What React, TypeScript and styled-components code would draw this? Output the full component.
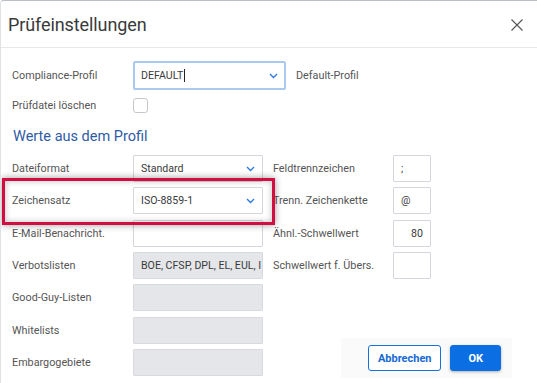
import React from "react";
import styled, { createGlobalStyle, css } from "styled-components";

const GlobalStyle = createGlobalStyle`
  html, body { margin: 0; padding: 0; background: #ffffff; }
  body { font-family: Roboto, "Noto Sans", Arial, sans-serif; color: #333; }
  * { box-sizing: border-box; }
`;

const Dialog = styled.div`
  position: relative;
  width: 537px;
  height: 383px;
  overflow: hidden;
  background: #fff;
  border-top: 1px solid #b9bec4;
  border-left: 1px solid #dfe2e5;
  border-top-left-radius: 4px;
`;

const Header = styled.div`
  height: 47px;
  display: flex;
  align-items: center;
  justify-content: space-between;
  padding: 1px 13px 0 7px;
  border-bottom: 1px solid #e6e8ea;
`;

const Title = styled.h1`
  margin: 0;
  font-size: 18px;
  font-weight: 400;
  color: #3a3a3a;
  letter-spacing: -0.1px;
`;

const CloseButton = styled.button`
  border: 0;
  background: none;
  padding: 0;
  width: 14px;
  height: 14px;
  display: flex;
  cursor: pointer;
`;

const Body = styled.div`
  padding: 13px 0 0 11px;
`;

const Row = styled.div<{ $mt?: number; $h?: number }>`
  display: flex;
  align-items: center;
  height: ${(p) => p.$h ?? 27}px;
  margin-top: ${(p) => p.$mt ?? 0}px;
`;

const Label = styled.span<{ $w?: number }>`
  width: ${(p) => p.$w ?? 121}px;
  flex: none;
  font-size: 10.8px;
  color: #555;
  white-space: nowrap;
`;

const Field = styled.div<{ $w: number; $h?: number; $disabled?: boolean; $focus?: boolean; $align?: string }>`
  width: ${(p) => p.$w}px;
  height: ${(p) => p.$h ?? 27}px;
  flex: none;
  display: flex;
  align-items: center;
  justify-content: ${(p) => p.$align ?? "flex-start"};
  padding: 0 ${(p) => (p.$align === "flex-end" ? 7 : 2)}px 0 7px;
  font-size: 10.6px;
  color: #3a3a3a;
  background: ${(p) => (p.$disabled ? "#e4e6e9" : "#fff")};
  border: 1px solid ${(p) => (p.$disabled ? "#d8dadd" : "#d3d6da")};
  border-radius: 1px;
  overflow: hidden;
  white-space: nowrap;
  ${(p) =>
    p.$focus &&
    css`
      border: 2px solid #a9c9f1;
      padding: 0 1px 0 6px;
      border-radius: 2px;
    `}
`;

const FieldText = styled.span`
  flex: 1;
  min-width: 0;
  white-space: nowrap;
`;

const Caret = styled.span`
  display: inline-block;
  width: 1px;
  height: 13px;
  background: #222;
  vertical-align: middle;
  margin-left: 1px;
`;

const Hint = styled.span`
  margin-left: 10px;
  font-size: 10.8px;
  color: #555;
`;

const Checkbox = styled.span`
  width: 15px;
  height: 15px;
  border: 1px solid #c4c8cc;
  border-radius: 3px;
  background: #fff;
`;

const SectionTitle = styled.h2`
  margin: 15px 0 0 1px;
  height: 18px;
  line-height: 18px;
  font-size: 14.5px;
  font-weight: 400;
  color: #2f5ba4;
`;

const Columns = styled.div`
  display: flex;
  margin-top: 9px;
  gap: 10px;
`;

const Column = styled.div<{ $w: number }>`
  width: ${(p) => p.$w}px;
  display: flex;
  flex-direction: column;
  gap: 5.33px;
`;

const Footer = styled.div`
  align-self: flex-end;
  width: 171px;
  margin-top: 54px;
  padding: 7px 11px 7px 27px;
  background: #fafafa;
  display: flex;
  gap: 9px;
`;

const Button = styled.button<{ $primary?: boolean }>`
  height: 26px;
  padding: 0;
  width: ${(p) => (p.$primary ? 51 : 74)}px;
  border-radius: 3px;
  font-family: Roboto, Arial, sans-serif;
  font-size: 11px;
  font-weight: 700;
  cursor: pointer;
  ${(p) =>
    p.$primary
      ? css`
          background: #0b6fe3;
          color: #fff;
          border: 1px solid #0b6fe3;
          box-shadow: 0 1px 3px rgba(0, 0, 0, 0.3);
        `
      : css`
          background: #fff;
          color: #1668d4;
          border: 1px solid #1670e0;
        `}
`;

const Highlight = styled.div`
  position: absolute;
  left: 1px;
  top: 177px;
  width: 273px;
  height: 47px;
  border: 3px solid #d20d41;
  box-shadow: 0 0 7px rgba(0, 0, 0, 0.4), inset 0 0 6px rgba(0, 0, 0, 0.25);
  pointer-events: none;
`;

const ChevronIcon = styled.svg`
  flex: none;
  margin-right: 5px;
`;

const Chevron = () => (
  <ChevronIcon width="9" height="6" viewBox="0 0 9 6">
    <path d="M1 1l3.5 3.5L8 1" fill="none" stroke="#2f7ae0" strokeWidth="1.4" />
  </ChevronIcon>
);

const CloseIcon = () => (
  <svg width="14" height="14" viewBox="0 0 14 14">
    <path d="M1.5 1.5l11 11M12.5 1.5l-11 11" stroke="#555" strokeWidth="1.1" />
  </svg>
);

const leftRows: { label: string; value?: string; select?: boolean; disabled?: boolean }[] = [
  { label: "Dateiformat", value: "Standard", select: true },
  { label: "Zeichensatz", value: "ISO-8859-1", select: true },
  { label: "E-Mail-Benachricht." },
  { label: "Verbotslisten", value: "BOE, CFSP, DPL, EL, EUL, I", disabled: true },
  { label: "Good-Guy-Listen", disabled: true },
  { label: "Whitelists", disabled: true },
  { label: "Embargogebiete", disabled: true },
];

const rightRows: { label: string; value: string; align?: string }[] = [
  { label: "Feldtrennzeichen", value: ";" },
  { label: "Trenn. Zeichenkette", value: "@" },
  { label: "Ähnl.-Schwellwert", value: "80", align: "flex-end" },
  { label: "Schwellwert f. Übers.", value: "" },
];

export default function App() {
  return (
    <>
      <GlobalStyle />
      <Dialog>
        <Header>
          <Title>Prüfeinstellungen</Title>
          <CloseButton aria-label="Schließen">
            <CloseIcon />
          </CloseButton>
        </Header>
        <Body>
          <Row $h={29}>
            <Label>Compliance-Profil</Label>
            <Field $w={153} $h={29} $focus>
              <FieldText>
                DEFAULT
                <Caret />
              </FieldText>
              <Chevron />
            </Field>
            <Hint>Default-Profil</Hint>
          </Row>
          <Row $h={15} $mt={8}>
            <Label>Prüfdatei löschen</Label>
            <Checkbox />
          </Row>
          <SectionTitle>Werte aus dem Profil</SectionTitle>
          <Columns>
            <Column $w={251}>
              {leftRows.map((r) => (
                <Row key={r.label}>
                  <Label>{r.label}</Label>
                  <Field $w={130} $disabled={r.disabled}>
                    <FieldText>{r.value}</FieldText>
                    {r.select && <Chevron />}
                  </Field>
                </Row>
              ))}
            </Column>
            <Column $w={239}>
              {rightRows.map((r) => (
                <Row key={r.label}>
                  <Label $w={120}>{r.label}</Label>
                  <Field $w={38} $align={r.align}>
                    {r.value}
                  </Field>
                </Row>
              ))}
              <Footer>
                <Button>Abbrechen</Button>
                <Button $primary>OK</Button>
              </Footer>
            </Column>
          </Columns>
        </Body>
        <Highlight />
      </Dialog>
    </>
  );
}
